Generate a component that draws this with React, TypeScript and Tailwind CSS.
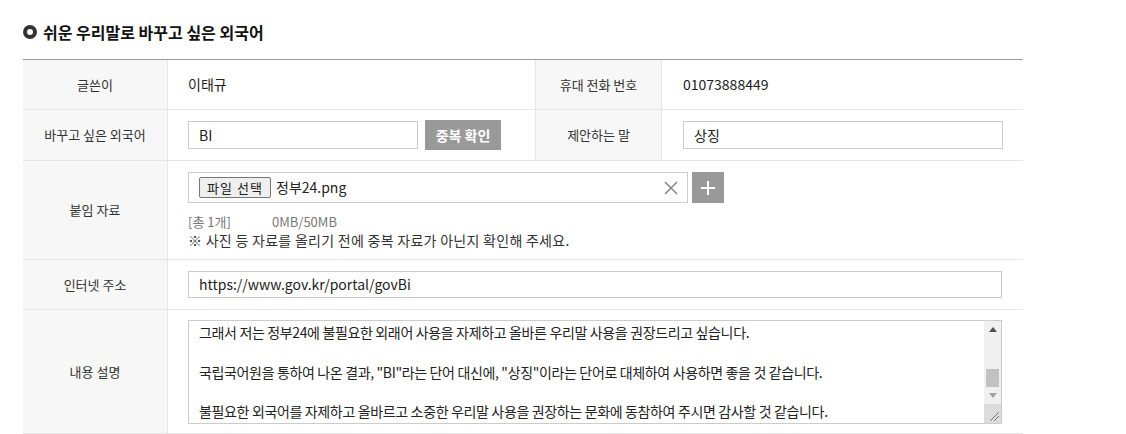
import React from 'react';

const font = { fontFamily: '"Noto Sans CJK KR", "Noto Sans", sans-serif' };

function LabelCell({ children, className = '' }: { children: React.ReactNode; className?: string }) {
  return (
    <div className={`flex items-center justify-center bg-[#f7f7f7] text-[13px] text-[#333] ${className}`}>
      {children}
    </div>
  );
}

export default function App() {
  return (
    <div className="bg-white w-[1126px] h-[434px] overflow-hidden" style={font}>
      <div className="pl-[23px] pt-[22px] w-[1023px]">
        {/* title */}
        <div className="flex items-center h-[20px] gap-[6px]">
          <span className="w-[14px] h-[14px] rounded-full border-[4px] border-[#333] bg-white" />
          <h2 className="text-[16px] font-bold text-[#111] leading-[20px]">쉬운 우리말로 바꾸고 싶은 외국어</h2>
        </div>

        {/* table */}
        <div className="mt-[17px] border-t border-[#999] w-[1000px]">
          {/* 글쓴이 / 휴대 전화 번호 */}
          <div className="flex h-[50px] border-b border-[#e5e5e5]">
            <LabelCell className="w-[145px] border-r border-[#e5e5e5]">글쓴이</LabelCell>
            <div className="w-[367px] flex items-center pl-[20px] text-[14px] text-[#222]">이태규</div>
            <LabelCell className="w-[127px] border-x border-[#e5e5e5]">휴대 전화 번호</LabelCell>
            <div className="flex-1 flex items-center pl-[21px] text-[14px] text-[#222]">01073888449</div>
          </div>

          {/* 바꾸고 싶은 외국어 / 제안하는 말 */}
          <div className="flex h-[51px] border-b border-[#e5e5e5]">
            <LabelCell className="w-[145px] border-r border-[#e5e5e5]">바꾸고 싶은 외국어</LabelCell>
            <div className="w-[367px] flex items-center pl-[20px] gap-[7px]">
              <div className="w-[230px] h-[28px] border border-[#ccc] flex items-center pl-[10px] text-[14px] text-[#222]">
                BI
              </div>
              <button className="w-[76px] h-[30px] bg-[#999] text-white text-[14px] font-bold">중복 확인</button>
            </div>
            <LabelCell className="w-[127px] border-x border-[#e5e5e5]">제안하는 말</LabelCell>
            <div className="flex-1 flex items-center pl-[21px]">
              <div className="w-[320px] h-[28px] border border-[#ccc] flex items-center pl-[10px] text-[14px] text-[#222]">
                상징
              </div>
            </div>
          </div>

          {/* 붙임 자료 */}
          <div className="flex h-[99px] border-b border-[#e5e5e5]">
            <LabelCell className="w-[145px] border-r border-[#e5e5e5]">붙임 자료</LabelCell>
            <div className="flex-1 pl-[20px] pt-[11px]">
              <div className="flex gap-[4px]">
                <div className="w-[500px] h-[31px] border border-[#ccc] flex items-center pl-[10px] pr-[8px]">
                  <span className="w-[72px] h-[21px] flex items-center justify-center border border-[#767676] rounded-[2px] bg-[#efefef] text-[13px] text-[#222] tracking-[0.08em]">
                    파일 선택
                  </span>
                  <span className="ml-[5px] text-[14px] text-[#222]">정부24.png</span>
                  <svg className="ml-auto" width="16" height="16" viewBox="0 0 16 16">
                    <path d="M2 2 L14 14 M14 2 L2 14" stroke="#8a8a8a" strokeWidth="1.6" fill="none" />
                  </svg>
                </div>
                <div className="w-[32px] h-[31px] bg-[#999] flex items-center justify-center">
                  <svg width="16" height="16" viewBox="0 0 16 16">
                    <path d="M8 1 V15 M1 8 H15" stroke="#fff" strokeWidth="2" fill="none" />
                  </svg>
                </div>
              </div>
              <div className="mt-[9px] flex text-[13px] text-[#777] leading-[19px]">
                <span className="w-[84px]">[총 1개]</span>
                <span>0MB/50MB</span>
              </div>
              <div className="text-[14px] text-[#333] leading-[19px] tracking-[0.02em]">
                ※ 사진 등 자료를 올리기 전에 중복 자료가 아닌지 확인해 주세요.
              </div>
            </div>
          </div>

          {/* 인터넷 주소 */}
          <div className="flex h-[50px] border-b border-[#e5e5e5]">
            <LabelCell className="w-[145px] border-r border-[#e5e5e5]">인터넷 주소</LabelCell>
            <div className="flex-1 flex items-center pl-[20px]">
              <div className="w-[814px] h-[27px] border border-[#ccc] flex items-center pl-[10px] text-[14px] text-[#222]">
                https://www.gov.kr/portal/govBi
              </div>
            </div>
          </div>

          {/* 내용 설명 */}
          <div className="flex h-[124px] border-b border-[#e5e5e5]">
            <LabelCell className="w-[145px] border-r border-[#e5e5e5]">내용 설명</LabelCell>
            <div className="flex-1 pl-[20px] pt-[10px]">
              <div className="w-[814px] h-[104px] border border-[#ccc] flex overflow-hidden">
                <div className="flex-1 pl-[10px] pt-[2px] text-[14px] text-[#222] leading-[19.75px] tracking-[-0.025em] whitespace-pre-line">
                  {'그래서 저는 정부24에 불필요한 외래어 사용을 자제하고 올바른 우리말 사용을 권장드리고 싶습니다.\n\n국립국어원을 통하여 나온 결과, "BI"라는 단어 대신에, "상징"이라는 단어로 대체하여 사용하면 좋을 것 같습니다.\n\n불필요한 외국어를 자제하고 올바르고 소중한 우리말 사용을 권장하는 문화에 동참하여 주시면 감사할 것 같습니다.'}
                </div>
                {/* scrollbar */}
                <div className="w-[17px] bg-[#f0f0f0] flex flex-col">
                  <div className="h-[17px] flex items-center justify-center">
                    <svg width="8" height="5" viewBox="0 0 8 5">
                      <path d="M0 5 L4 0 L8 5 Z" fill="#505050" />
                    </svg>
                  </div>
                  <div className="h-[31px]" />
                  <div className="mx-[2px] h-[18px] bg-[#c1c1c1]" />
                  <div className="h-[17px] flex items-center justify-center">
                    <svg width="8" height="5" viewBox="0 0 8 5">
                      <path d="M0 0 L4 5 L8 0 Z" fill="#a3a3a3" />
                    </svg>
                  </div>
                  <div className="flex-1 bg-[#dcdcdc] flex items-end justify-end p-[2px]">
                    <svg width="10" height="10" viewBox="0 0 10 10">
                      <path d="M10 1 L1 10 M10 5 L5 10" stroke="#777" strokeWidth="1" fill="none" />
                    </svg>
                  </div>
                </div>
              </div>
            </div>
          </div>
        </div>
      </div>
    </div>
  );
}
